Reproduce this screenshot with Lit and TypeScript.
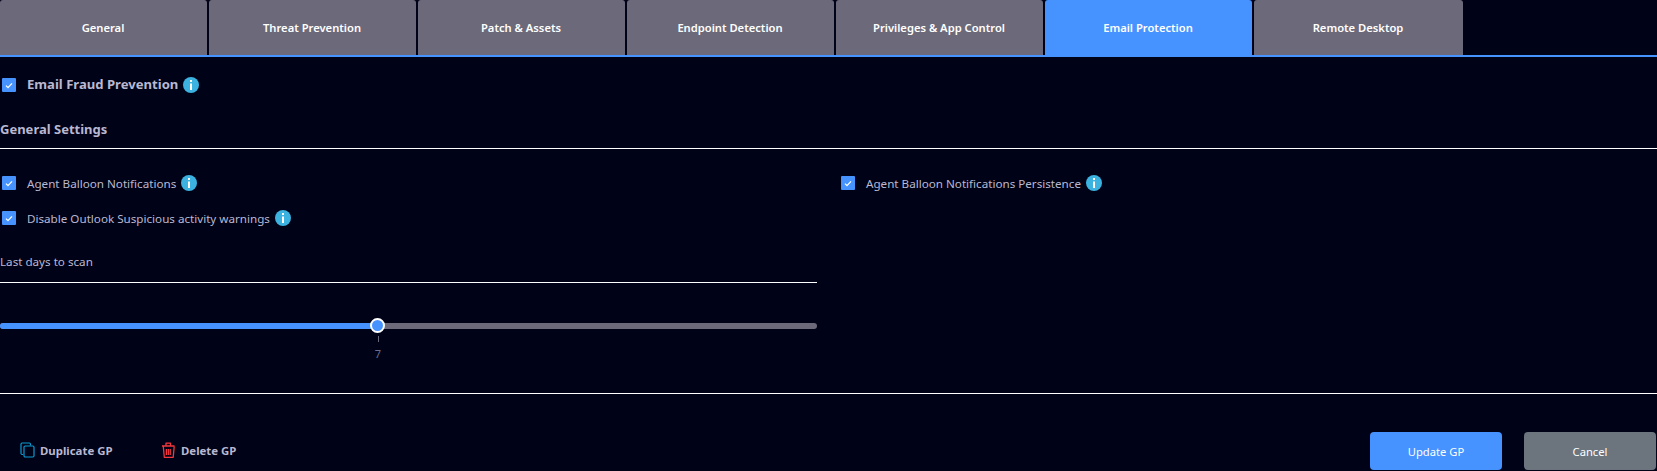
import { LitElement, html, css } from "lit";
import { customElement } from "lit/decorators.js";

const tabs = ["General","Threat Prevention","Patch & Assets","Endpoint Detection","Privileges & App Control","Email Protection","Remote Desktop"];

@customElement("app-root")
export class AppRoot extends LitElement {
  static styles = css`
    :host { display:block; width:1657px; height:471px; overflow:hidden; background:#000218; font-family:"Noto Sans","Open Sans",sans-serif; color:#b9b8d0; }
    .tabs { display:flex; gap:2px; height:55px; border-bottom:2px solid #4692ff; }
    .tab { width:207px; background:#6c6a7a; color:#fff; border-top-left-radius:3px; border-top-right-radius:3px; display:flex; align-items:center; justify-content:center; font-size:11.2px; font-weight:600; padding-right:1px; box-sizing:border-box; }
    .tab.last { width:209px; }
    .tab.active { background:#4692ff; }
    .row { display:flex; align-items:center; }
    .main { height:16px; margin-top:20px; font-size:13.1px; font-weight:700; }
    .main span.t { margin-bottom:2px; }
    .cb { width:14px; height:14px; margin-left:2px; margin-right:11px; background:#4692ff; border-radius:1px; display:flex; align-items:center; justify-content:center; flex:none; }
    .info { margin-left:5px; flex:none; display:block; }
    h3 { margin:26px 0 0; font-size:13px; line-height:20px; font-weight:700; color:#b9b8d0; }
    .rule { height:1px; background:#fff; border:0; margin:0; }
    .sec { margin-top:9px; }
    .cols { display:grid; grid-template-columns:817px 1fr; column-gap:22px; margin-top:26px; }
    .col { display:flex; flex-direction:column; gap:19px; font-size:11.65px; }
    .col .row { height:16px; }
    .slider-box { width:817px; }
    .lbl { font-size:11.65px; line-height:16px; margin-top:28px; height:16px; }
    .lbl-rule { margin-top:12px; }
    .slider { position:relative; height:6px; margin-top:40px; background:#6c6a7a; border-radius:3px; }
    .fill { height:100%; background:#4692ff; border-radius:3px 0 0 3px; }
    .thumb { position:absolute; top:-5px; margin-left:-7.5px; border:2px solid #fff; border-radius:50%; background:#4692ff; width:11px; height:11px; }
    .tick { position:absolute; top:13px; width:1px; height:6px; background:#6c6a7a; }
    .val { position:absolute; top:23px; width:20px; margin-left:-10px; text-align:center; font-size:11px; line-height:16px; color:#6d6f92; }
    .bottom { margin-top:64px; }
    .foot { display:flex; align-items:flex-start; justify-content:space-between; margin-top:38px; padding-right:1px; }
    .links { display:flex; margin-top:10px; font-size:11.4px; font-weight:700; }
    .link { display:flex; align-items:center; gap:5px; }
    .link.dup { margin-left:20px; width:141px; }
    .btns { display:flex; gap:22px; }
    .btn { width:132px; height:38px; border-radius:4px; color:#fff; font-size:11.2px; display:flex; align-items:center; justify-content:center; background:#4692ff; }
    .btn.cancel { background:#6c757d; }
  `;

  check() {
    return html`<span class="cb"><svg width="8" height="7" viewBox="0 0 8 7"><path d="M1 3.6 3 5.6 7 1.4" fill="none" stroke="#fff" stroke-width="1.3"/></svg></span>`;
  }
  info() {
    return html`<svg class="info" width="16" height="16" viewBox="0 0 16 16"><circle cx="8" cy="8" r="8" fill="#3cb2e0"/><rect x="7" y="3" width="2" height="2" fill="#fff"/><rect x="7" y="6.5" width="2" height="6.5" fill="#fff"/></svg>`;
  }
  render() {
    return html`
      <div class="tabs">
        ${tabs.map((t,i)=>html`<div class="tab ${i===5?"active":""} ${i===6?"last":""}">${t}</div>`)}
      </div>
      <div class="row main">${this.check()}<span class="t">Email Fraud Prevention</span>${this.info()}</div>
      <h3>General Settings</h3>
      <hr class="rule sec" />
      <div class="cols">
        <div class="col">
          <div class="row">${this.check()}<span>Agent Balloon Notifications</span>${this.info()}</div>
          <div class="row">${this.check()}<span>Disable Outlook Suspicious activity warnings</span>${this.info()}</div>
        </div>
        <div class="col">
          <div class="row">${this.check()}<span>Agent Balloon Notifications Persistence</span>${this.info()}</div>
        </div>
      </div>
      <div class="slider-box">
        <div class="lbl">Last days to scan</div>
        <hr class="rule lbl-rule" />
        <div class="slider">
          <div class="fill" style="width:377px"></div>
          <div class="thumb" style="left:377px"></div>
          <div class="tick" style="left:378px"></div>
          <div class="val" style="left:378px">7</div>
        </div>
      </div>
      <hr class="rule bottom" />
      <div class="foot">
        <div class="links">
          <div class="link dup">
            <svg width="15" height="16" viewBox="0 0 15 16" fill="none" stroke="#0a9bd0" stroke-width="1.2"><path d="M3 12.5H2a1.2 1.2 0 0 1-1-1V2a1.2 1.2 0 0 1 1-1h7.5a1.2 1.2 0 0 1 1 1v1.5"/><rect x="4" y="4" width="10" height="11" rx="1.2"/></svg>
            <span>Duplicate GP</span>
          </div>
          <div class="link">
            <svg width="15" height="16" viewBox="0 0 15 16" fill="none" stroke="#f2383e" stroke-width="1.3"><path d="M1 4h12.5M5 3.7V1.2h4.5v2.5M2.3 4.5l1 10.8h8.9l1-10.8M5.4 7v6M7.3 7v6M9.2 7v6" stroke-linejoin="round"/></svg>
            <span>Delete GP</span>
          </div>
        </div>
        <div class="btns">
          <div class="btn">Update GP</div>
          <div class="btn cancel">Cancel</div>
        </div>
      </div>
    `;
  }
}
